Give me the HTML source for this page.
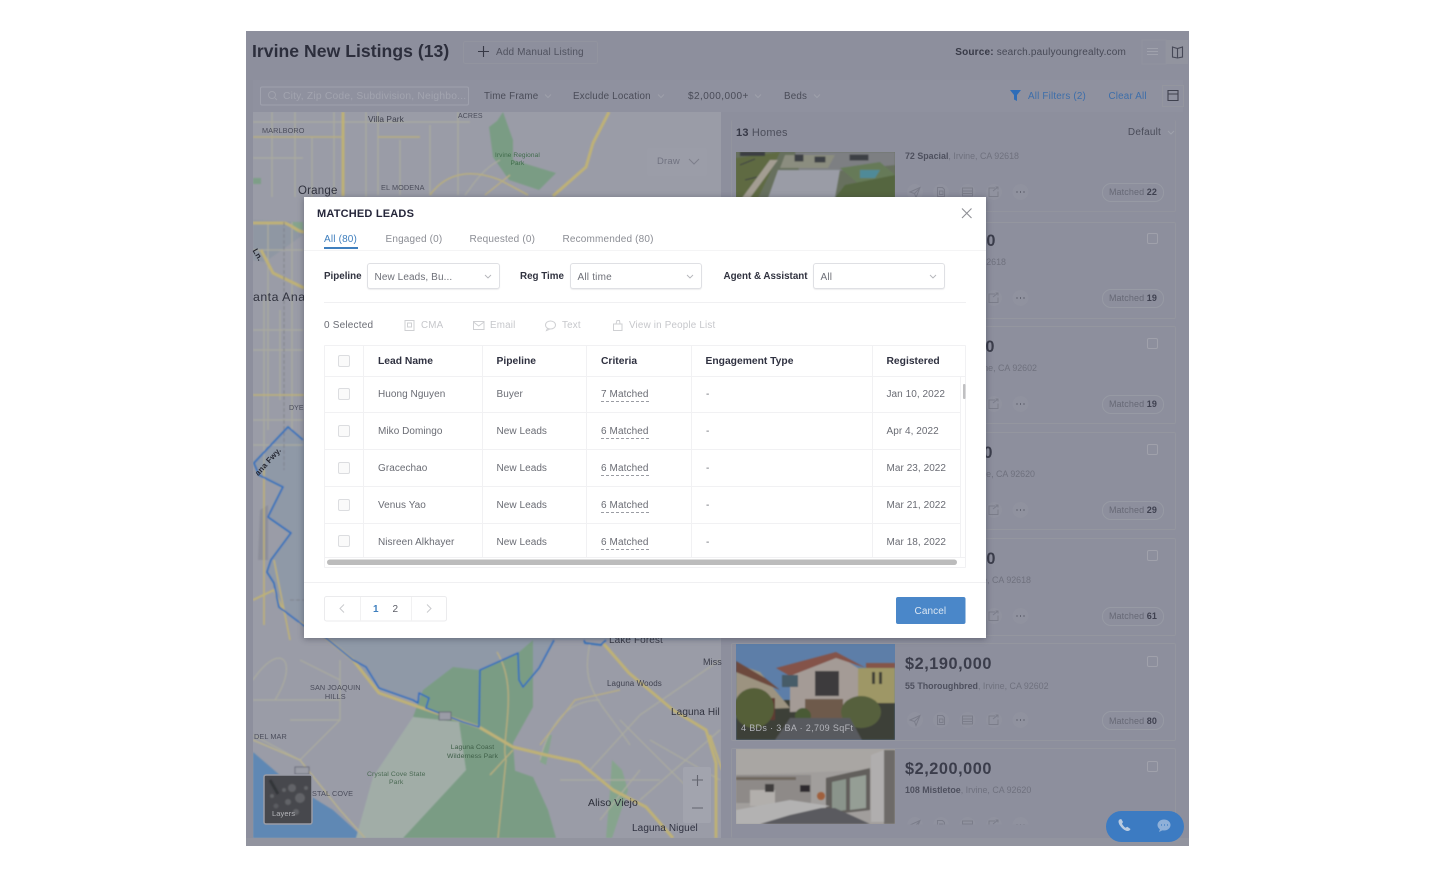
<!DOCTYPE html>
<html lang="en"><head><meta charset="utf-8"><title>Matched Leads</title>
<style>
html,body{margin:0;padding:0;background:#fff;width:1435px;height:878px;overflow:hidden}
body{position:relative;font-family:"Liberation Sans",sans-serif;-webkit-font-smoothing:antialiased}
.t{position:absolute;white-space:nowrap;line-height:14px;font-size:10px;letter-spacing:.2px;margin-top:1px}
.r{text-align:right}
.b{font-weight:bold}
.box{position:absolute;box-sizing:border-box}
svg{position:absolute;left:0;top:0}
.m{color:#4a4c58}
.g{color:#7b7d8a}
.rowt{color:#6a6c74;font-size:10px;letter-spacing:.05px;margin-top:2px}
.hdr{color:#2f3140;font-weight:bold;font-size:10.3px;letter-spacing:0;margin-top:2px}
.tab{color:#8b8d94;font-size:10px;letter-spacing:.17px}
.dash{border-bottom:1px dashed #9a9ca3;line-height:12px;height:12px;letter-spacing:.1px}
.cb{position:absolute;left:338px;width:12px;height:12px;box-sizing:border-box;border:1px solid #dcdde0;border-radius:2px;background:#fafafa}
.lab{color:#30323f;font-weight:bold;font-size:9.8px;letter-spacing:0}
.sel{position:absolute;top:263px;height:26px;box-sizing:border-box;border:1px solid #dfe0e4;border-radius:3px;background:#fff;box-shadow:0 1px 1px #eeeeef}
.dis{color:#c6c7cb;font-size:9.8px;letter-spacing:.2px}
.card{position:absolute;left:731px;width:445px;box-sizing:border-box;border:1px solid #94969f;border-radius:2px}
.pill{position:absolute;left:1102px;width:62px;height:19px;box-sizing:border-box;border:1px solid #979aa4;border-radius:9px}
.ml{color:#676976;font-size:9px;letter-spacing:.1px}
.ml b{color:#3f4150}
.chk{position:absolute;left:1147px;width:11px;height:11px;box-sizing:border-box;border:1px solid #a0a1ab;border-radius:2px}
.price{color:#3b3d4b;font-weight:bold;font-size:16.3px;letter-spacing:.55px;line-height:20px}
.addr{color:#6f717e;font-size:8.9px;letter-spacing:0}
.addr b{color:#4e505e}
.mp{color:#4b4d5b;font-size:8px;letter-spacing:.1px;line-height:10px;text-align:center}
</style></head><body>

<!-- dimmed app background -->
<div class="box" style="left:246px;top:31px;width:943px;height:815px;background:#8d8f9d"></div>
<div class="box" style="left:253px;top:80px;width:930px;height:32px;background:#8f919f"></div>

<svg width="1435" height="878" viewBox="0 0 1435 878" style="z-index:1">
<defs>
<filter id="bl"><feGaussianBlur stdDeviation=".7"/></filter>
<clipPath id="mc"><rect x="253" y="112" width="468" height="726"/></clipPath>
<clipPath id="p1"><rect x="736" y="152" width="159" height="46"/></clipPath>
<clipPath id="p6"><rect x="736" y="644" width="159" height="96"/></clipPath>
<clipPath id="p7"><rect x="736" y="749" width="159" height="75"/></clipPath>
</defs>

<rect x="253" y="112" width="468" height="726" fill="#9a9ca7"/>
<g clip-path="url(#mc)" filter="url(#bl)">
 <!-- water -->
 <polygon points="253,752 289,783 333,810 364,838 253,838" fill="#5f88b4"/>
 <!-- area inside boundary -->
 <polygon points="288,427 303,440 720,440 720,640 554,640 539,668 523,687 519,680 518,653 480,670 479,727 439,713 413,700 379,688 353,660 326,638 303,625 279,607 274,583 267,572 271,560 291,533 268,517 283,487 259,475 254,463" fill="#8f99a7"/>
 <!-- parks -->
 <polygon points="489,127 497,121 503,112 513,140 513,160 556,173 539,190 509,180 493,157" fill="#7a9c84"/>
 <polygon points="403,838 459,743 413,717 423,690 453,667 479,670 518,653 533,640 533,707 513,743 520,838" fill="#7a9c84"/>
 <polygon points="413,717 459,722 466,770 403,838 356,838 373,777" fill="#a1ada7"/>
 <polygon points="513,770 533,777 548,810 556,838 509,838" fill="#7a9c84"/>
 <polygon points="612,760 622,770 628,790 612,838 606,838 610,790" fill="#86a48d"/>
 <polygon points="547,735 552,735 546,765 540,762" fill="#86a48d"/>
 <polygon points="253,220 303,222 303,235 265,262 253,260" fill="#8f97a3"/>
 <rect x="253" y="178" width="8" height="6" fill="#7e9e87"/>
 <polygon points="292,222 303,222 303,232 295,232" fill="#86a48d"/>
 <polygon points="260,510 268,505 268,560 258,560" fill="#8c8e9a"/>
 <!-- minor roads -->
 <g fill="none" stroke="#abac9f" stroke-width="1.2">
  <path d="M253 122H470M253 158H303M272 112V197M295 112V197M312 137V197M334 112V197M366 112V197M378 112V195M400 140V195M430 125V195M458 112V195M500 160C480 170 470 190 465 195"/>
  <path d="M253 250H303M253 330H303M253 350H303M253 420H303M253 445H303M268 222V430M292 222V430M264 300V470M280 310V400"/>
  <path d="M253 680C280 640 300 660 275 700M253 700H340M300 660L340 680M340 660V720L300 760L253 735M340 720L290 720"/>
  <path d="M590 643C580 690 600 700 630 745M600 700C570 700 550 720 540 760M590 770L640 715M640 715L720 660M650 740L720 780M620 720L700 800M640 800L720 730M560 780L660 780M600 820L640 770"/>
 </g>
 <path d="M253 740L300 760L340 810L365 838" fill="none" stroke="#b6b08f" stroke-width="1.6"/>
 <path d="M497 652C520 690 500 740 506 760L498 838M513 750L490 775" fill="none" stroke="#b9ae7e" stroke-width="1.3"/>
 <path d="M540 745L575 700L620 690M485 195L510 175" fill="none" stroke="#b9ae82" stroke-width="1.4"/>
 <path d="M430 195C448 170 475 170 500 180L528 195M253 137H343M378 137H420" fill="none" stroke="#b8ae80" stroke-width="1.6"/>
 <!-- highways -->
 <g fill="none" stroke="#beb177" stroke-linejoin="round">
  <path d="M609 112L593 143L586 167L553 196" stroke-width="3"/>
  <path d="M343 112V196" stroke-width="3"/>
  <path d="M253 223H285C293 226 298 232 304 232M261 250L273 273L304 288" stroke-width="3"/>
  <path d="M253 395H304" stroke-width="1.6"/>
  <path d="M299 622L326 638L353 660L379 693L419 707L479 727L513 747L546 755L579 762L613 790L646 807L673 838" stroke-width="3"/>
  <path d="M603 643L629 673L673 710L706 730L716 763V838" stroke-width="3"/>
  <path d="M710 735L722 770" stroke-width="2"/>
  <path d="M264 470V625M274 560L290 640" stroke-width="1.6"/>
  <path d="M253 600L274 590L284 612" stroke-width="2"/>
 </g>
 <path d="M284 222V470M290 600H304" fill="none" stroke="#7b7c84" stroke-width=".8" stroke-dasharray="4 2"/>
 <!-- boundary -->
 <path d="M303 440L288 427L254 463L259 475L283 487L268 517L291 533L271 560L267 572L274 583L279 607L303 625L326 638L353 660L366 667L379 688L413 700L418 703L419 693L429 698L426 708L439 713L463 722L479 727L480 670L518 653L519 680L523 687L539 668L554 640M584 640L585 643L601 645L606 640" fill="none" stroke="#3070bc" stroke-width="1.7" stroke-linejoin="round"/>
 <rect x="439" y="712" width="12" height="8" fill="#9a9ca6" stroke="#555766" stroke-width=".7"/>
 <rect x="295" y="767" width="14" height="7" fill="#9a9ca6" stroke="#555766" stroke-width=".7"/>
</g>

<!-- draw & zoom control -->
<rect x="647" y="148" width="60" height="28" rx="2" fill="#9b9da8"/>
<path d="M689 159l5 5 5-5" fill="none" stroke="#7d7f8b" stroke-width="1"/>
<rect x="683" y="767" width="28" height="56" rx="2" fill="#a2a4ae"/>
<path d="M692 780h11M697.500 775v11M692 808h11" stroke="#63656f" stroke-width="1.1" fill="none"/>
<!-- layers thumb -->
<rect x="264" y="775" width="48" height="49" rx="2" fill="#47484d" stroke="#9a9ca6" stroke-width="1.5"/>
<g filter="url(#bl)" fill="#626367"><circle cx="292" cy="788" r="4"/><circle cx="300" cy="798" r="5"/><circle cx="288" cy="802" r="3"/><circle cx="272" cy="796" r="2"/><circle cx="284" cy="790" r="2"/><circle cx="296" cy="812" r="3"/><circle cx="306" cy="788" r="2"/><circle cx="276" cy="806" r="2.500" fill="#5a5b60"/><path d="M270 780l8 14" stroke="#333438" stroke-width="3"/></g>

<!-- top-bar icons -->
<path d="M478 51.500h11M483.500 46v11" stroke="#363845" stroke-width="1.1" fill="none"/>
<rect x="463.500" y="41.500" width="134" height="22" rx="2" fill="none" stroke="#92949f"/>
<rect x="260.500" y="87" width="208" height="18" rx="1.500" fill="none" stroke="#9fa1ad"/>
<circle cx="272" cy="95" r="3.500" fill="none" stroke="#9fa1ac"/><path d="M275 98l2 2" stroke="#9fa1ac"/>
<g fill="none" stroke="#9ea0ab" stroke-width="1">
<path d="M545 94.500l3 3 3-3M658 94.500l3 3 3-3M755 94.500l3 3 3-3M814 94.500l3 3 3-3M1168 131l3 3 3-3"/>
</g>
<rect x="1142" y="40" width="24" height="24" fill="none" stroke="#91939f"/>
<path d="M1147 48.500h11M1147 51.500h11M1147 54.500h11" stroke="#9fa1ac" stroke-width="1"/>
<rect x="1166" y="40" width="22" height="24" fill="#92949f"/>
<path d="M1172.500 47l5 1.500 5-1.500v10l-5 1-5-1zM1177.500 48.500v9" fill="none" stroke="#474957" stroke-width="1.1"/>
<rect x="1162.500" y="85.500" width="21" height="21" fill="none" stroke="#94969f"/>
<path d="M1168 90.500h10v10h-10zM1168 94h10" fill="none" stroke="#3f414e" stroke-width="1.100"/>
<path d="M1010 90h11l-4 5v6l-3-1.500V95z" fill="#2e6db8"/>

<!-- photos -->
<g clip-path="url(#p1)"><rect x="736" y="152" width="159" height="46" fill="#67705e"/>
 <g filter="url(#bl)">
 <polygon points="736,158 780,152 758,198 736,198" fill="#5e6a42"/>
 <polygon points="795,152 895,152 895,165 800,175" fill="#7d7f82"/>
 <polygon points="778,170 840,170 835,198 768,198" fill="#9a9ca6"/>
 <polygon points="785,155 835,155 828,168 780,168" fill="#8b8d7f"/>
 <polygon points="840,168 880,162 895,175 860,185" fill="#667a58"/>
 <polygon points="860,170 880,170 875,178 860,178" fill="#4f8a98"/>
 <polygon points="770,160 778,160 750,198 742,198" fill="#a39d92"/>
 <polygon points="845,185 895,175 895,198 835,198" fill="#55663f"/>
 <rect x="740" y="152" width="25" height="4" fill="#3a3c42"/>
 <path d="M795 155h8v6h-8zM815 157h10v5h-10zM850 155h18v5h-18zM740 165l15-6M745 180l12-3" fill="#3d3f44" stroke="#3d3f44"/>
 </g></g>

<g clip-path="url(#p6)"><rect x="736" y="644" width="159" height="96" fill="#5d7ea8"/>
 <g filter="url(#bl)">
 <rect x="736" y="700" width="159" height="40" fill="#3e4038"/>
 <polygon points="736,664 760,672 790,708 736,710" fill="#9c9380"/>
 <polygon points="736,661 765,678 780,690 736,672" fill="#6d4a3e"/>
 <polygon points="790,675 836,654 858,668 858,710 790,712" fill="#a49b96"/>
 <polygon points="776,668 836,652 866,668 836,658 790,676" fill="#84524a"/>
 <rect x="858" y="668" width="37" height="35" fill="#9e9766"/>
 <rect x="866" y="663" width="29" height="5" fill="#85554a"/>
 <rect x="782" y="675" width="16" height="12" fill="#465c68"/>
 <rect x="815" y="671" width="24" height="25" fill="#3c3a3e"/>
 <rect x="765" y="698" width="10" height="22" fill="#5f3a30"/>
 <rect x="805" y="699" width="38" height="19" fill="#6e5a4c"/>
 <rect x="872" y="672" width="3" height="12" fill="#3e3c34"/><rect x="879" y="672" width="3" height="12" fill="#3e3c34"/>
 <ellipse cx="754" cy="708" rx="20" ry="20" fill="#555f38"/>
 <ellipse cx="861" cy="712" rx="20" ry="16" fill="#57613c"/>
 <ellipse cx="803" cy="716" rx="8" ry="8" fill="#4a5a34"/>
 <polygon points="790,718 850,718 862,740 775,740" fill="#585a5e"/>
 </g></g>

<g clip-path="url(#p7)"><rect x="736" y="749" width="159" height="75" fill="#a19e9c"/>
 <g filter="url(#bl)">
 <polygon points="736,749 895,749 895,752 875,770 736,775" fill="#a9a6a3"/>
 <rect x="736" y="775" width="75" height="28" fill="#8e8a88"/>
 <rect x="736" y="777" width="60" height="3" fill="#70675f"/>
 <rect x="750" y="790" width="25" height="16" fill="#b2afac"/>
 <rect x="765" y="784" width="9" height="8" fill="#3f3d3c"/>
 <rect x="800" y="785" width="10" height="7" fill="#2d2c2e"/>
 <polygon points="826,778 870,768 870,810 826,815" fill="#625f5c"/>
 <polygon points="832,782 846,779 846,810 832,812" fill="#8a948b"/>
 <polygon points="850,778 866,775 866,808 850,810" fill="#959e95"/>
 <polygon points="871,755 884,750 884,822 871,822" fill="#b0aeae"/>
 <rect x="884" y="750" width="11" height="74" fill="#6d6a68"/>
 <polygon points="745,824 800,808 835,808 870,824" fill="#5a5a5e"/>
 <polygon points="736,810 790,800 830,806 790,815 760,824 736,824" fill="#b3b2b2"/>
 <circle cx="821" cy="796" r="4" fill="#a0603c"/>
 </g></g>

<!-- card action icons -->
<defs>
<g id="acts" fill="none" stroke="#7b7d8a" stroke-width="1">
 <circle cx="915" cy="0" r="8" fill="#90929f" stroke="none"/><circle cx="941" cy="0" r="8" fill="#90929f" stroke="none"/><circle cx="967.500" cy="0" r="8" fill="#90929f" stroke="none"/><circle cx="994" cy="0" r="8" fill="#90929f" stroke="none"/><circle cx="1020.500" cy="0" r="8" fill="#90929f" stroke="none"/>
 <path d="M910 0l10-4.500-4 10-1.500-4zM914.500 1.500l5.500-5.500"/>
 <path d="M937.500-4.500h5l2 2v7h-7zM939.500-1h3.500v3.500h-3.500z"/>
 <path d="M962.500-4h10v8h-10zM962.500-1h10M962.500 1.500h10"/>
 <path d="M995-4h-6v8.500h9v-5M993-1l5-4M995.500-5h2.500v2.500"/>
 <path d="M1016.500 0h1M1020 0h1M1023.500 0h1" stroke="#555765" stroke-width="1.500"/>
</g></defs>
<use href="#acts" x="0" y="192"/><use href="#acts" x="0" y="298"/><use href="#acts" x="0" y="404"/><use href="#acts" x="0" y="510"/><use href="#acts" x="0" y="616"/><use href="#acts" x="0" y="720"/>
<g clip-path="url(#pc)"><use href="#acts" x="0" y="825"/></g>
<clipPath id="pc"><rect x="900" y="815" width="140" height="9.500"/></clipPath>
</svg>

<!-- listing cards -->
<div class="card" style="top:120px;height:92px;border-top:0;border-color:#92949e;z-index:1"></div>
<div class="card" style="top:222px;height:97px;z-index:1"></div>
<div class="card" style="top:326px;height:98px;z-index:1"></div>
<div class="card" style="top:432px;height:98px;z-index:1"></div>
<div class="card" style="top:538px;height:98px;z-index:1"></div>
<div class="card" style="top:643px;height:98px;z-index:1"></div>
<div class="card" style="top:748px;height:90px;border-bottom:0;z-index:1"></div>
<div class="box" style="left:246px;top:838px;width:943px;height:8px;background:#92949f;z-index:1"></div>

<div style="position:absolute;left:0;top:0;width:1435px;height:878px;z-index:2">
<div class="t b" style="left:252px;top:40px;font-size:17.6px;line-height:20px;letter-spacing:.03px;color:#2c2e3c">Irvine New Listings (13)</div>
<div class="t" style="left:496px;top:45px;color:#50525f;font-size:10px;letter-spacing:.15px">Add Manual Listing</div>
<div class="t r" style="right:309px;top:45px;color:#474956;font-size:10px;letter-spacing:.19px"><b style="color:#383a47">Source:</b> search.paulyoungrealty.com</div>
<div class="t" style="left:283px;top:89px;color:#a2a4af;font-size:10.3px">City, Zip Code, Subdivision, Neighbo...</div>
<div class="t m" style="left:484px;top:89px;font-size:9.800px">Time Frame</div>
<div class="t m" style="left:573px;top:89px;font-size:9.800px">Exclude Location</div>
<div class="t m" style="left:688px;top:89px;font-size:10px;letter-spacing:.45px">$2,000,000+</div>
<div class="t m" style="left:784px;top:89px;font-size:9.800px">Beds</div>
<div class="t" style="left:1028px;top:89px;color:#3d6eaa;font-size:9.800px">All Filters (2)</div>
<div class="t" style="left:1108.500px;top:89px;color:#3d6eaa;font-size:9.800px">Clear All</div>
<div class="t" style="left:736px;top:125px;color:#4c4e5b;font-size:11px"><b style="color:#363846">13</b> Homes</div>
<div class="t r" style="right:274px;top:125px;color:#4a4c59;font-size:10px">Default</div>

<div class="t addr" style="left:905px;top:148px"><b>72 Spacial</b>, Irvine, CA 92618</div>
<div class="t price r" style="right:439px;top:230px">$2,150,000</div>
<div class="t price r" style="right:440px;top:336px">$2,160,000</div>
<div class="t price r" style="right:442px;top:442px">$2,170,000</div>
<div class="t price r" style="right:439px;top:548px">$2,180,000</div>
<div class="t price" style="left:905px;top:653px">$2,190,000</div>
<div class="t price" style="left:905px;top:758px">$2,200,000</div>
<div class="t addr r" style="right:429px;top:254px">Irvine, CA 92618</div>
<div class="t addr r" style="right:398px;top:360px">Irvine, CA 92602</div>
<div class="t addr r" style="right:400px;top:466px">Irvine, CA 92620</div>
<div class="t addr r" style="right:404px;top:572px">Irvine, CA 92618</div>
<div class="t addr" style="left:905px;top:678px"><b>55 Thoroughbred</b>, Irvine, CA 92602</div>
<div class="t addr" style="left:905px;top:782px"><b>108 Mistletoe</b>, Irvine, CA 92620</div>

<div class="pill" style="top:183px"></div><div class="t ml r" style="right:278px;top:184px">Matched <b>22</b></div>
<div class="pill" style="top:289px"></div><div class="t ml r" style="right:278px;top:290px">Matched <b>19</b></div>
<div class="pill" style="top:395px"></div><div class="t ml r" style="right:278px;top:396px">Matched <b>19</b></div>
<div class="pill" style="top:501px"></div><div class="t ml r" style="right:278px;top:502px">Matched <b>29</b></div>
<div class="pill" style="top:607px"></div><div class="t ml r" style="right:278px;top:608px">Matched <b>61</b></div>
<div class="pill" style="top:711px"></div><div class="t ml r" style="right:278px;top:713px">Matched <b>80</b></div>
<div class="chk" style="top:233px"></div><div class="chk" style="top:338px"></div><div class="chk" style="top:444px"></div><div class="chk" style="top:550px"></div><div class="chk" style="top:656px"></div><div class="chk" style="top:761px"></div>

<div class="t" style="left:741px;top:720px;color:#b4b5bb;font-size:9px;letter-spacing:.35px">4 BDs · 3 BA · 2,709 SqFt</div>

<div class="t mp" style="left:368px;top:113px;color:#3e404c;font-size:8.300px">Villa Park</div>
<div class="t mp" style="left:458px;top:111px;font-size:7px">ACRES</div>
<div class="t mp" style="left:262px;top:125px;font-size:7.300px">MARLBORO</div>
<div class="t mp" style="left:495px;top:151px;color:#3f6b4a;font-size:6.500px;line-height:8px">Irvine Regional<br>Park</div>
<div class="t mp" style="left:381px;top:182px;font-size:7.300px">EL MODENA</div>
<div class="t" style="left:298px;top:183px;color:#30323e;font-size:11.500px">Orange</div>
<div class="t" style="left:253px;top:289px;color:#30323e;font-size:12.300px;letter-spacing:.5px">anta Ana</div>
<div class="t" style="left:657px;top:154px;color:#707280;font-size:9.500px">Draw</div>
<div class="t" style="left:251px;top:247px;color:#23252f;font-size:8px;font-weight:bold;transform:rotate(60deg)">Ln.</div>
<div class="t" style="left:251px;top:454px;color:#262833;font-size:8px;font-weight:bold;transform:rotate(-48deg)">ana Fwy.</div>
<div class="t mp" style="left:289px;top:403px;font-size:7px">DYE</div>
<div class="t mp" style="left:609px;top:635px;color:#383a46;font-size:10px">Lake Forest</div>
<div class="t mp" style="left:703px;top:656px;color:#3a3c48;font-size:9px">Miss</div>
<div class="t mp" style="left:607px;top:678px;color:#404250;font-size:8px">Laguna Woods</div>
<div class="t mp" style="left:671px;top:707px;color:#30323e;font-size:10px">Laguna Hil</div>
<div class="t mp" style="left:310px;top:682px;font-size:7.300px;line-height:9px">SAN JOAQUIN<br>HILLS</div>
<div class="t mp" style="left:254px;top:731px;font-size:7.300px">DEL MAR</div>
<div class="t mp" style="left:447px;top:743px;color:#3f5f48;font-size:6.800px;line-height:8.500px">Laguna Coast<br>Wilderness Park</div>
<div class="t mp" style="left:367px;top:770px;color:#4b6a54;font-size:6.800px;line-height:8px">Crystal Cove State<br>Park</div>
<div class="t mp" style="left:312px;top:788px;font-size:7.300px">STAL COVE</div>
<div class="t mp" style="left:588px;top:797px;color:#2b2d38;font-size:10.500px">Aliso Viejo</div>
<div class="t mp" style="left:632px;top:823px;color:#2f3140;font-size:10px">Laguna Niguel</div>
<div class="t mp" style="left:272px;top:808px;color:#b5b6ba;font-size:7.500px">Layers</div>
</div>

<!-- call button -->
<svg width="1435" height="878" style="z-index:3">
<rect x="1106" y="811" width="78" height="31" rx="15.500" fill="#3c7bc2"/>
<path d="M1119.500 819.500c-1.500 1-1.200 3.500.5 6s4.500 5 7 5.500c1.500.3 3-.5 3.500-2l-3.200-2.300-1.800 1c-1-.5-3-2.800-3.500-4l1-1.700-1.800-3z" fill="#b9cbe0"/>
<ellipse cx="1164" cy="825" rx="6.500" ry="5.500" fill="#8fb0d8"/><path d="M1160 829l-1 3 4-2z" fill="#8fb0d8"/>
<path d="M1161 825h1M1164 825h1M1167 825h1" stroke="#3c7bc2" stroke-width="1.200"/>
</svg>

<!-- modal -->
<div class="box" style="left:304px;top:197px;width:682px;height:441px;background:#fff;box-shadow:0 1px 6px rgba(30,32,50,.4);z-index:5">
<div style="position:absolute;left:-304px;top:-197px;width:1435px;height:878px">
<div class="t b" style="left:317px;top:206px;font-size:11px;letter-spacing:.2px;color:#25263a">MATCHED LEADS</div>
<svg width="1435" height="878"><path d="M962 208.500l9.500 9.500M971.500 208.500L962 218" stroke="#8e8f95" stroke-width="1.100" fill="none"/>
<path d="M304 250.500h682" stroke="#f4f4f5"/>
<rect x="324" y="247" width="34" height="2" fill="#3f7fbe"/>
<path d="M324 302.500h642M304 582.500h682" stroke="#f0f0f2"/>

<!-- action bar icons -->
<g fill="none" stroke="#cfd0d3" stroke-width="1">
<path d="M405 320.500h9v10h-9zM407.500 323h4v4h-4z"/>
<path d="M473.500 321.500h10.500v8h-10.500zM473.500 322l5.200 4 5.300-4"/>
<ellipse cx="550.500" cy="325" rx="5" ry="4"/><path d="M547.500 328.500l-1 2 3-1.200"/>
<path d="M613.500 324h8.500v6.500h-8.500zM616 324l1-3.500 2.500 0 .5 3.500"/>
</g>

<!-- table lines -->
<g stroke="#f1f1f3" fill="none">
<path d="M324.500 345.500H965.500M324.500 345.500V567.500M324.500 567.500H965.500M965.500 345.500V567.500"/>
<path d="M363.500 345.500V557M482.500 345.500V557M586.500 345.500V557M691.500 345.500V557M872.500 345.500V557M960.500 377V557"/>
<path d="M325 376.500H965M325 412.500H960M325 449.500H960M325 486.500H960M325 523.500H960M325 557.500H965"/>
</g>
<rect x="327" y="559.500" width="630" height="5.500" rx="2.700" fill="#bcbcbc"/>
<rect x="963" y="384" width="2.500" height="15" rx="1" fill="#c0c0c2"/>

<!-- pagination -->
<rect x="324.500" y="596.500" width="122" height="24.500" rx="2" fill="#fff" stroke="#ebebed"/>
<path d="M360.500 597v24M411.500 597v24" stroke="#f1f1f2"/>
<path d="M344 604.500l-4 4 4 4M427 604.500l4 4-4 4" fill="none" stroke="#c9cacd" stroke-width="1"/>
<rect x="896" y="597" width="69.500" height="27" rx="2" fill="#4a87c9"/>
</svg>

<div class="t tab" style="left:324px;top:232px;color:#3f7fbe">All (80)</div>
<div class="t tab" style="left:385.500px;top:232px">Engaged (0)</div>
<div class="t tab" style="left:469.500px;top:232px">Requested (0)</div>
<div class="t tab" style="left:562.500px;top:232px">Recommended (80)</div>

<div class="t lab" style="left:324px;top:269px">Pipeline</div>
<div class="t lab" style="left:520px;top:269px">Reg Time</div>
<div class="t lab" style="left:723.500px;top:269px">Agent &amp; Assistant</div>
<div class="sel" style="left:367px;width:133px"></div>
<div class="sel" style="left:570px;width:132px"></div>
<div class="sel" style="left:813px;width:132px"></div>
<svg width="1435" height="878"><g fill="none" stroke="#b4b5ba" stroke-width=".9"><path d="M485 275l3 3 3-3M687 275l3 3 3-3M930 275l3 3 3-3"/></g></svg>
<div class="t" style="left:374.500px;top:270px;color:#6e7078;font-size:10px;letter-spacing:.1px">New Leads, Bu...</div>
<div class="t" style="left:577.500px;top:270px;color:#6e7078;font-size:10px">All time</div>
<div class="t" style="left:820.500px;top:270px;color:#6e7078;font-size:10px">All</div>

<div class="t" style="left:324px;top:318px;color:#6a6c74;font-size:10px">0 Selected</div>
<div class="t dis" style="left:421px;top:318px">CMA</div>
<div class="t dis" style="left:490px;top:318px">Email</div>
<div class="t dis" style="left:562px;top:318px">Text</div>
<div class="t dis" style="left:629px;top:318px">View in People List</div>

<div class="cb" style="top:355px"></div>
<div class="t hdr" style="left:378px;top:353px">Lead Name</div>
<div class="t hdr" style="left:496.500px;top:353px">Pipeline</div>
<div class="t hdr" style="left:601px;top:353px">Criteria</div>
<div class="t hdr" style="left:705.500px;top:353px">Engagement Type</div>
<div class="t hdr" style="left:886.500px;top:353px">Registered</div>

<div class="cb" style="top:388px"></div>
<div class="t rowt" style="left:378px;top:386px">Huong Nguyen</div>
<div class="t rowt" style="left:496.500px;top:386px">Buyer</div>
<div class="t rowt dash" style="left:601px;top:387px">7 Matched</div>
<div class="t rowt" style="left:706px;top:386px">-</div>
<div class="t rowt" style="left:886.500px;top:386px">Jan 10, 2022</div>

<div class="cb" style="top:425px"></div>
<div class="t rowt" style="left:378px;top:423px">Miko Domingo</div>
<div class="t rowt" style="left:496.500px;top:423px">New Leads</div>
<div class="t rowt dash" style="left:601px;top:424px">6 Matched</div>
<div class="t rowt" style="left:706px;top:423px">-</div>
<div class="t rowt" style="left:886.500px;top:423px">Apr 4, 2022</div>

<div class="cb" style="top:462px"></div>
<div class="t rowt" style="left:378px;top:460px">Gracechao</div>
<div class="t rowt" style="left:496.500px;top:460px">New Leads</div>
<div class="t rowt dash" style="left:601px;top:461px">6 Matched</div>
<div class="t rowt" style="left:706px;top:460px">-</div>
<div class="t rowt" style="left:886.500px;top:460px">Mar 23, 2022</div>

<div class="cb" style="top:499px"></div>
<div class="t rowt" style="left:378px;top:497px">Venus Yao</div>
<div class="t rowt" style="left:496.500px;top:497px">New Leads</div>
<div class="t rowt dash" style="left:601px;top:498px">6 Matched</div>
<div class="t rowt" style="left:706px;top:497px">-</div>
<div class="t rowt" style="left:886.500px;top:497px">Mar 21, 2022</div>

<div class="cb" style="top:535px"></div>
<div class="t rowt" style="left:378px;top:534px">Nisreen Alkhayer</div>
<div class="t rowt" style="left:496.500px;top:534px">New Leads</div>
<div class="t rowt dash" style="left:601px;top:535px">6 Matched</div>
<div class="t rowt" style="left:706px;top:534px">-</div>
<div class="t rowt" style="left:886.500px;top:534px">Mar 18, 2022</div>

<div class="t b" style="left:373px;top:602px;color:#3f7fbe;font-size:10px">1</div>
<div class="t" style="left:392.500px;top:602px;color:#5b5d66;font-size:10px">2</div>
<div class="t" style="left:914.500px;top:604px;color:#dbe7f3;font-size:10px;letter-spacing:.1px">Cancel</div>
</div>
</div>
</body></html>
